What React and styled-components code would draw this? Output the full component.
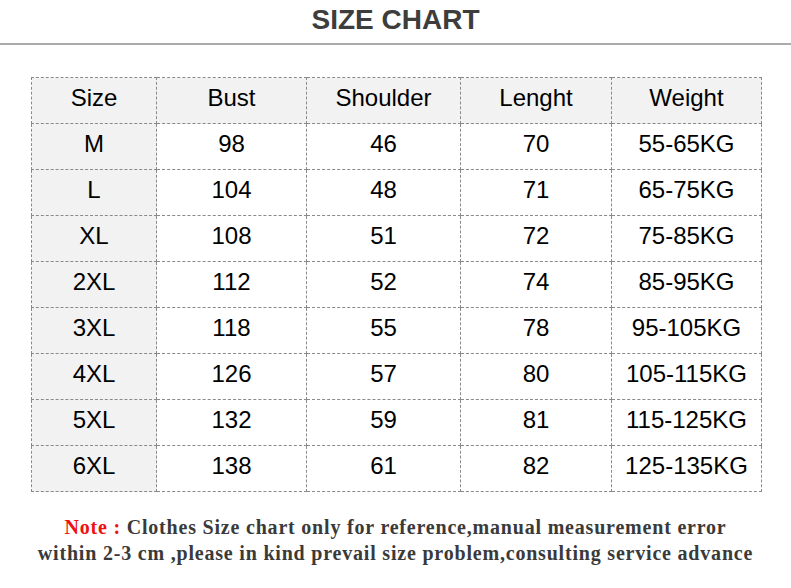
import styled, { createGlobalStyle } from "styled-components";

const GlobalStyle = createGlobalStyle`
    html, body {
        margin: 0;
        padding: 0;
        background: #ffffff;
    }
`;

const Page = styled.div`
    width: 791px;
    height: 588px;
    overflow: hidden;
    background: #ffffff;
`;

const Header = styled.div`
    height: 43px;
    border-bottom: 2px solid #ababab;
    display: flex;
    justify-content: center;
    align-items: flex-start;
`;

const Title = styled.h1`
    margin: 0;
    padding-top: 4px;
    font-family: "Liberation Sans", Arial, sans-serif;
    font-size: 28px;
    font-weight: 700;
    color: #3d3d3d;
    line-height: 32px;
`;

const Table = styled.table`
    margin: 32px 0 0 31px;
    border-collapse: collapse;
    table-layout: fixed;
    width: 731px;
    font-family: "Liberation Sans", Arial, sans-serif;
    color: #000;
`;

const Cell = styled.td`
    height: ${(props) => (props.$head ? "39px" : "40px")};
    padding: 0 0 ${(props) => (props.$head ? "6px" : "5px")} 0;
    border: 1px dashed #8a8a8a;
    text-align: center;
    vertical-align: middle;
    font-size: 24px;
    line-height: 28px;
    background: ${(props) => (props.$shaded ? "#f2f2f2" : "#ffffff")};
`;

const Note = styled.div`
    margin-top: 22px;
    text-align: center;
    font-family: "Liberation Serif", Georgia, serif;
    font-weight: 700;
    font-size: 20px;
    letter-spacing: 0.8px;
    line-height: 26px;
    color: #3a3a3a;
`;

const Red = styled.span`
    color: #ee1111;
`;

const widths = [125, 150, 154, 151, 150];
const head = ["Size", "Bust", "Shoulder", "Lenght", "Weight"];
const rows = [
    ["M", "98", "46", "70", "55-65KG"],
    ["L", "104", "48", "71", "65-75KG"],
    ["XL", "108", "51", "72", "75-85KG"],
    ["2XL", "112", "52", "74", "85-95KG"],
    ["3XL", "118", "55", "78", "95-105KG"],
    ["4XL", "126", "57", "80", "105-115KG"],
    ["5XL", "132", "59", "81", "115-125KG"],
    ["6XL", "138", "61", "82", "125-135KG"],
];

function App() {
    return (
        <Page>
            <GlobalStyle />
            <Header>
                <Title>SIZE CHART</Title>
            </Header>
            <Table>
                <colgroup>
                    {widths.map((w, i) => (
                        <col key={i} style={{ width: w }} />
                    ))}
                </colgroup>
                <tbody>
                    <tr>
                        {head.map((h) => (
                            <Cell key={h} $shaded $head>
                                {h}
                            </Cell>
                        ))}
                    </tr>
                    {rows.map((r) => (
                        <tr key={r[0]}>
                            {r.map((v, i) => (
                                <Cell key={i} $shaded={i === 0}>
                                    {v}
                                </Cell>
                            ))}
                        </tr>
                    ))}
                </tbody>
            </Table>
            <Note>
                <Red>Note :</Red> Clothes Size chart only for reference,manual measurement error
                <br />
                within 2-3 cm ,please in kind prevail size problem,consulting service advance
            </Note>
        </Page>
    );
}

export default App;
